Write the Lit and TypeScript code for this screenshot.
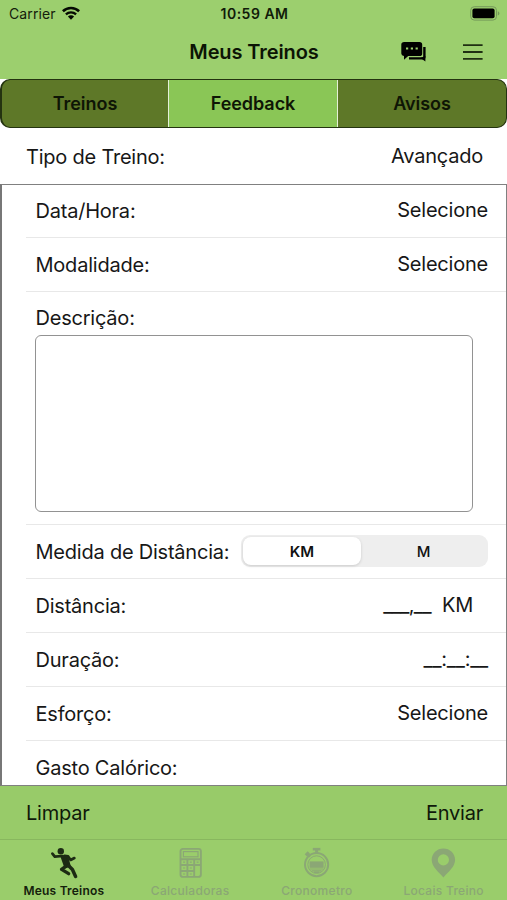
import { LitElement, html, css, svg } from "lit";
import { customElement, property, state } from "lit/decorators.js";
import { classMap } from "lit/directives/class-map.js";

const icons = {
  runner: svg`<svg width="28" height="32" viewBox="0 0 28 32" fill="none" stroke="#1d2b14" stroke-linecap="round" stroke-linejoin="round">
    <circle cx="10.8" cy="4.2" r="3.2" fill="#1d2b14" stroke="none"/>
    <path d="M2.4 6.6L4.8 9.6L12.6 9" stroke-width="2.7"/>
    <path d="M14.6 8.8L18.2 9.4L20.6 13L24.4 11" stroke-width="2.6"/>
    <path d="M11.6 9.4L17 9.6L19.4 18.6L15.4 20.2Z" fill="#1d2b14" stroke-width="2.4"/>
    <path d="M16.2 19L11.6 22.4L18.6 26.6" stroke-width="3.4"/>
    <path d="M18.4 18.6L22.4 22.6L25.6 29.4" stroke-width="3.5"/>
  </svg>`,
  calculator: svg`<svg width="28" height="32" viewBox="0 0 28 32" fill="none" stroke="#8ba775" stroke-width="1.9">
    <rect x="4.5" y="1.9" width="20.4" height="28" rx="2.4"/>
    <rect x="7.4" y="4.6" width="14.6" height="5.2" stroke-width="1.2"/>
    <path d="M4.6 12.2H24.6M4.6 18H24.6M4.6 24H18.6M11.4 12V30M18.2 12V30" stroke-width="1.9"/>
    <path d="M7.1 15.1h2M13.8 15.1h2M20.6 15.1h2M7.1 21h2M13.8 21h2M7.1 27h2M13.8 27h2" stroke-width="1.2"/>
  </svg>`,
  stopwatch: svg`<svg width="28" height="32" viewBox="0 0 28 32" fill="none" stroke="#8ba775">
    <circle cx="13.6" cy="17.6" r="11.6" stroke-width="2"/>
    <circle cx="13.6" cy="17.6" r="8.8" stroke-width="1"/>
    <path d="M6.6 14.4H20.6V20.8H6.6Z" fill="#8ba775" stroke="none"/>
    <path d="M6.8 22H20.4M8.6 23.8H18.6M11 25.4H16.2" stroke-width="1.2"/>
    <path d="M9.8 2.2H17.4" stroke-width="2.6"/>
    <path d="M13.6 2V6.4" stroke-width="3"/>
    <path d="M2.8 8.4L5.8 5.4" stroke-width="3.2"/>
    <path d="M4.2 7L7 9.8" stroke-width="2"/>
  </svg>`,
  pin: svg`<svg width="28" height="32" viewBox="0 0 28 32" fill="#8ba775" fill-rule="evenodd">
    <path d="M13.4 1.4C6.8 1.4 1.7 6.3 1.7 12.8C1.7 20 8.4 24.6 13.4 30.4C18.4 24.6 25.1 20 25.1 12.8C25.1 6.3 20 1.4 13.4 1.4ZM13.4 7.3A5.6 5.6 0 1 1 13.4 18.5A5.6 5.6 0 1 1 13.4 7.3Z"/>
  </svg>`,
};

@customElement("status-bar")
class StatusBar extends LitElement {
  static styles = css`
    :host { display: grid; grid-template-columns: 1fr auto 1fr; align-items: center; height: 28px; padding: 0 7px 0 9px; color: #14200b; }
    .carrier { display: flex; align-items: center; gap: 6px; font-size: 14px; letter-spacing: 0.1px; margin-top: -1px; }
    .time { font-size: 14px; font-weight: 600; letter-spacing: 0.5px; color: #111b09; margin-top: -1px; }
    .battery { justify-self: end; display: block; margin-top: -2px; }
    .wifi { display: block; margin-top: -1px; }
  `;
  render() {
    return html`
      <div class="carrier">Carrier
        <svg class="wifi" width="18" height="14" viewBox="0 0 18 14" fill="none" stroke="#050a02" stroke-width="2.6">
          <path d="M0.9 5.2A11.8 11.8 0 0 1 17.1 5.2"/>
          <path d="M3.9 8.4A7.4 7.4 0 0 1 14.1 8.4" stroke-width="2.3"/>
          <path d="M9 13.8L5.9 10.6A4.4 4.4 0 0 1 12.1 10.6Z" fill="#050a02" stroke="none"/>
        </svg>
      </div>
      <div class="time">10:59 AM</div>
      <svg class="battery" width="30" height="15" viewBox="0 0 30 15">
        <rect x="0.7" y="0.7" width="25.8" height="13.4" rx="3.6" fill="none" stroke="#75995a"/>
        <rect x="2.4" y="2.5" width="22.2" height="9.8" rx="2" fill="#000"/>
        <path d="M27.8 5.2Q29.4 5.8 29.4 7.4T27.8 9.6Z" fill="#75995a"/>
      </svg>`;
  }
}

@customElement("nav-header")
class NavHeader extends LitElement {
  static styles = css`
    :host { display: grid; grid-template-columns: 1fr auto 1fr; align-items: center; height: 51px; padding: 0 24px 0 25px; box-sizing: border-box; }
    .title { grid-column: 2; font-size: 20px; font-weight: 600; letter-spacing: -0.1px; color: #0c1405; margin-top: -3px; }
    .actions { display: flex; justify-content: flex-end; align-items: center; gap: 36px; margin-top: -3px; }
    svg { display: block; }
  `;
  render() {
    return html`
      <div class="title">Meus Treinos</div>
      <div class="actions">
        <svg width="26" height="22" viewBox="0 0 26 22">
          <path d="M3.2 0.9H18.5Q21.2 0.9 21.2 3.6V12.4Q21.2 15 18.5 15H7.2L3 18.7V15Q0.3 14.6 0.3 12.4V3.6Q0.3 0.9 3.2 0.9Z" fill="#000"/>
          <path d="M5 6.4h2.2v2.2H5zM9.8 6.4h2.2v2.2H9.8zM14.6 6.4h2.2v2.2h-2.2z" fill="#9ccf6e"/>
          <path d="M23.4 6V15.7Q23.4 17.4 21.6 17.4H8" fill="none" stroke="#000" stroke-width="2.4"/>
          <path d="M19.5 17L24.4 20.4V15Z" fill="#000"/>
        </svg>
        <svg width="20" height="18" viewBox="0 0 20 18" stroke="#1f3012" stroke-width="1.8">
          <path d="M0 2.2H19.6M0 9H19.6M0 15.8H19.6"/>
        </svg>
      </div>`;
  }
}

@customElement("form-row")
class FormRow extends LitElement {
  @property() label = "";
  static styles = css`
    :host { display: flex; align-items: center; justify-content: space-between; box-sizing: border-box; height: 53.8px; padding: 1px 18px 0 9.5px; margin-left: 24px; border-bottom: 1px solid #e8e8e8; white-space: pre; }
    :host(.raised) { margin: 0; border: 0; height: 56px; padding: 2px 24px 0 26px; }
    :host([last]) { border: 0; }
    .value { display: flex; align-items: center; margin-top: -2px; letter-spacing: -0.22px; }
  `;
  render() {
    return html`<span>${this.label}</span><div class="value"><slot></slot></div>`;
  }
}

@customElement("app-root")
class AppRoot extends LitElement {
  @state() private section = "Feedback";
  @state() private unit = "KM";

  static styles = css`
    :host { display: flex; flex-direction: column; height: 900px; overflow: hidden; background: #fff; font-family: Inter, "Liberation Sans", sans-serif; font-size: 20px; letter-spacing: -0.22px; color: #171717; }
    .top { background: #9ccf6e; height: 79px; }
    .sections { display: grid; grid-template-columns: 166px 170px 1fr; height: 49px; box-sizing: border-box; border: 1.5px solid #243310; border-left-width: 2px; border-radius: 10px; overflow: hidden; background: #5e7828; }
    .section { display: grid; place-items: center; font-size: 18px; font-weight: 600; letter-spacing: -0.05px; color: #0e1505; }
    .section.active { background: #8ac656; border: solid #e5f0d8; border-width: 0 1.5px; }
    .panel { height: 602px; box-sizing: border-box; border: 1px solid #808080; border-left: 2px solid #777; overflow: hidden; }
    .rows { margin-top: -0.5px; }
    .description { box-sizing: border-box; height: 233.4px; margin-left: 24px; padding: 14px 33px 0 9.5px; border-bottom: 1px solid #e8e8e8; }
    .caption { display: block; line-height: 24px; }
    .area { box-sizing: border-box; height: 176.5px; margin: 5px 0 0 -0.5px; border: 1.3px solid #929292; border-radius: 6px; }
    .segmented { display: grid; grid-template-columns: 118px 1fr; width: 247px; height: 32px; box-sizing: border-box; padding: 2px; border-radius: 9px; background: #eee; }
    .segment { display: grid; place-items: center; border-radius: 8px; font-size: 15px; font-weight: 500; letter-spacing: 0; color: #111; }
    .segment.active { background: #fff; font-weight: 600; box-shadow: 0 1px 3px rgba(0, 0, 0, 0.15); }
    .mask { letter-spacing: -0.6px; }
    .unit { margin: 0 15px 0 11px; }
    .bottom { flex: 1; background: #98cb69; color: #0f180a; }
    .buttons { display: flex; justify-content: space-between; align-items: center; height: 54.5px; box-sizing: border-box; padding: 2px 24px 0 26px; border-bottom: 1px solid #88b75e; }
    .tabs { display: grid; grid-template-columns: repeat(4, 1fr); height: 60px; background: #9acd6b; }
    .tab { display: flex; flex-direction: column; align-items: center; padding-top: 7px; font-size: 12px; line-height: 14px; font-weight: 500; letter-spacing: 0.28px; color: #8ba775; gap: 5px; }
    .tab.active { font-weight: 600; letter-spacing: 0.2px; color: #14200b; padding-left: 1px; }
  `;

  render() {
    const tabs = [
      ["Meus Treinos", icons.runner],
      ["Calculadoras", icons.calculator],
      ["Cronometro", icons.stopwatch],
      ["Locais Treino", icons.pin],
    ] as const;
    return html`
      <div class="top"><status-bar></status-bar><nav-header></nav-header></div>
      <div class="sections">
        ${["Treinos", "Feedback", "Avisos"].map(
          (s) => html`<div class=${classMap({ section: true, active: s === this.section })} @click=${() => (this.section = s)}>${s}</div>`
        )}
      </div>
      <form-row class="raised" label="Tipo de Treino:">Avançado</form-row>
      <div class="panel">
        <div class="rows">
          <form-row label="Data/Hora:">Selecione</form-row>
          <form-row label="Modalidade:">Selecione</form-row>
          <div class="description">
            <span class="caption">Descrição:</span>
            <div class="area"></div>
          </div>
          <form-row label="Medida de Distância:">
            <div class="segmented">
              ${["KM", "M"].map(
                (u) => html`<div class=${classMap({ segment: true, active: u === this.unit })} @click=${() => (this.unit = u)}>${u}</div>`
              )}
            </div>
          </form-row>
          <form-row label="Distância:"><span class="mask">___,__</span><span class="unit">KM</span></form-row>
          <form-row label="Duração:">__:__:__</form-row>
          <form-row label="Esforço:">Selecione</form-row>
          <form-row last label="Gasto Calórico:"></form-row>
        </div>
      </div>
      <div class="bottom">
        <div class="buttons"><span>Limpar</span><span>Enviar</span></div>
        <div class="tabs">
          ${tabs.map(([name, icon], i) => html`<div class=${classMap({ tab: true, active: i === 0 })}>${icon}<span>${name}</span></div>`)}
        </div>
      </div>`;
  }
}
